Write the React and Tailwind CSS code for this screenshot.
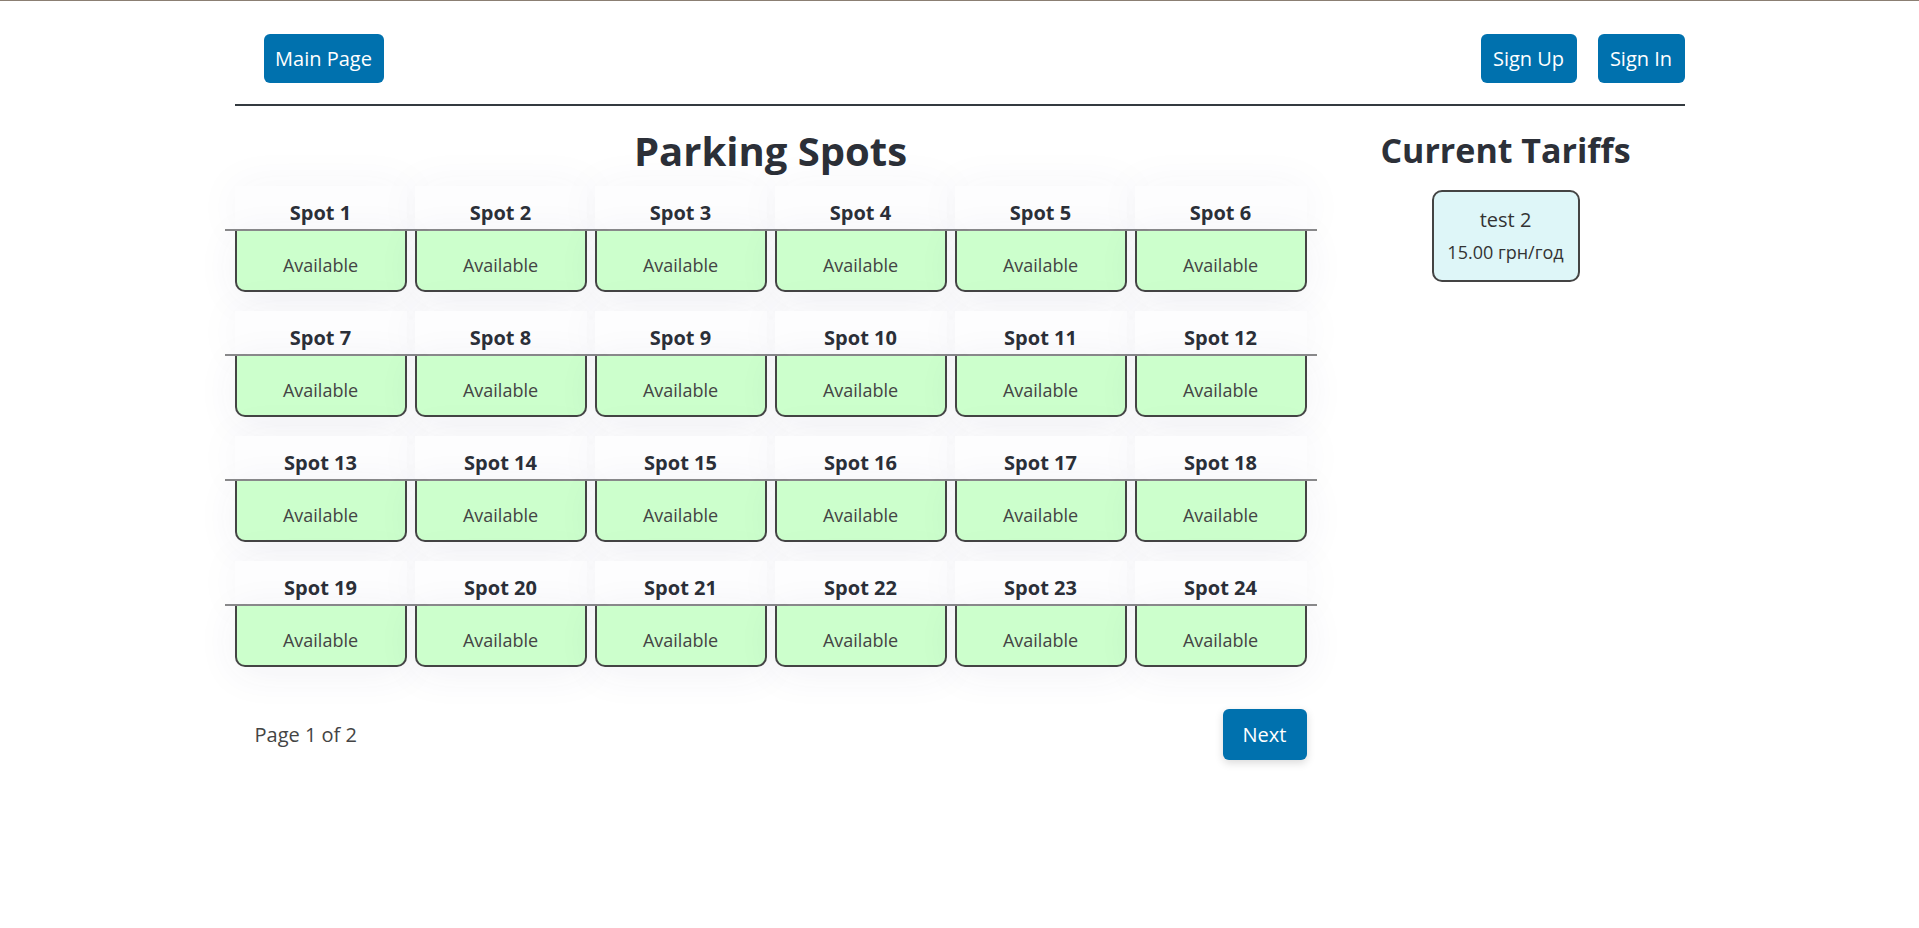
import React from 'react';

const FONT = { fontFamily: '"Segoe UI", "Open Sans", "Noto Sans", sans-serif' };

export default function App() {
  const spots = Array.from({ length: 24 }, (_, i) => i + 1);
  const rows = [0, 1, 2, 3].map((r) => spots.slice(r * 6, r * 6 + 6));

  return (
    <div className="min-h-screen bg-white border-t border-[#8b7f73]" style={FONT}>
      <div className="w-[1450px] mx-auto">
        {/* Nav */}
        <nav className="flex items-center justify-between pt-[33px] pb-[21px] pl-[29px]">
          <button className="h-[49px] w-[120px] rounded-[6px] bg-[#0071ae] text-[20px] text-white">
            Main Page
          </button>
          <div className="flex gap-[21px]">
            <button className="h-[49px] w-[96px] rounded-[6px] bg-[#0071ae] text-[20px] text-white">
              Sign Up
            </button>
            <button className="h-[49px] w-[87px] rounded-[6px] bg-[#0071ae] text-[20px] text-white">
              Sign In
            </button>
          </div>
        </nav>
        <div className="h-[2px] bg-[#343a40]" />

        <main className="flex">
          {/* Parking spots */}
          <section className="w-[1092px] -ml-[10px] flex flex-col">
            <h1 className="mt-[21px] text-center text-[40px] leading-[48px] font-bold text-[#2c3038]">
              Parking Spots
            </h1>

            <div className="mt-[11px] flex flex-col gap-[19px]">
              {rows.map((row, ri) => (
                <div key={ri} className="flex flex-col">
                  <div className="flex gap-2 px-[10px] border-b-2 border-[#8c8c8c]">
                    {row.map((n) => (
                      <div
                        key={n}
                        className="w-[172px] pt-[15px] pb-[4px] bg-[#fdfdfe] text-center text-[20px] leading-[24px] font-bold text-[#2c3038] shadow-[0_0_45px_rgba(60,60,120,0.05)]"
                      >
                        Spot {n}
                      </div>
                    ))}
                  </div>
                  <div className="flex gap-2 px-[10px]">
                    {row.map((n) => (
                      <div
                        key={n}
                        className="w-[172px] h-[61px] pt-[21px] border-2 border-t-0 border-[#444] rounded-b-[10px] bg-[#ccffcc] text-center text-[18px] leading-[26px] text-[#444] shadow-[0_6px_40px_rgba(60,60,120,0.07)]"
                      >
                        Available
                      </div>
                    ))}
                  </div>
                </div>
              ))}
            </div>

            <div className="mt-[42px] flex items-center justify-between pl-[30px] pr-[10px]">
              <span className="text-[20px] text-[#444]">Page 1 of 2</span>
              <button className="h-[51px] w-[84px] rounded-[6px] bg-[#0071ae] text-[20px] text-white shadow-[0_3px_8px_rgba(0,0,0,0.15)]">
                Next
              </button>
            </div>
          </section>

          {/* Tariffs */}
          <aside className="flex-1 pl-[10px] flex flex-col items-center">
            <h2 className="mt-[24px] text-[34px] leading-[40px] font-bold text-[#2c3038]">
              Current Tariffs
            </h2>
            <div className="mt-[20px] w-[148px] h-[92px] flex flex-col items-center justify-center gap-[5px] rounded-[10px] border-2 border-[#444] bg-[#def6f8] text-[#333]">
              <span className="text-[20px] leading-[28px] -mt-[2px]">test 2</span>
              <span className="text-[18px] leading-[26px]">15.00 грн/год</span>
            </div>
          </aside>
        </main>
      </div>
    </div>
  );
}
